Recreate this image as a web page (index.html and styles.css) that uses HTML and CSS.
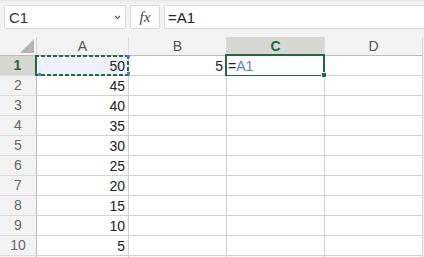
FILE: index.html
```html
<!DOCTYPE html>
<html lang="en">
<head>
    <meta charset="UTF-8">
    <meta name="viewport" content="width=device-width, initial-scale=1.0">
    <title>Sheet</title>
    <link rel="stylesheet" href="styles.css">
</head>
<body>
    <div class="toolbar">
        <div class="namebox">
            <span>C1</span>
            <svg class="chevron" width="7" height="5" viewBox="0 0 7 5"><path d="M1 1 L3.5 3.5 L6 1" fill="none" stroke="#555" stroke-width="1.1"/></svg>
        </div>
        <div class="fxbox"><i>fx</i></div>
        <div class="formula">=A1</div>
    </div>

    <div class="sheet">
        <div class="corner"><span class="tri"></span></div>
        <div class="colhead">A</div>
        <div class="colhead">B</div>
        <div class="colhead active">C</div>
        <div class="colhead">D</div>

        <div class="rowhead active">1</div>
        <div class="cell num ref">50</div>
        <div class="cell num">5</div>
        <div class="cell current">=<span class="refname">A1</span></div>
        <div class="cell"></div>

        <div class="rowhead">2</div><div class="cell num">45</div><div class="cell"></div><div class="cell"></div><div class="cell"></div>
        <div class="rowhead">3</div><div class="cell num">40</div><div class="cell"></div><div class="cell"></div><div class="cell"></div>
        <div class="rowhead">4</div><div class="cell num">35</div><div class="cell"></div><div class="cell"></div><div class="cell"></div>
        <div class="rowhead">5</div><div class="cell num">30</div><div class="cell"></div><div class="cell"></div><div class="cell"></div>
        <div class="rowhead">6</div><div class="cell num">25</div><div class="cell"></div><div class="cell"></div><div class="cell"></div>
        <div class="rowhead">7</div><div class="cell num">20</div><div class="cell"></div><div class="cell"></div><div class="cell"></div>
        <div class="rowhead">8</div><div class="cell num">15</div><div class="cell"></div><div class="cell"></div><div class="cell"></div>
        <div class="rowhead">9</div><div class="cell num">10</div><div class="cell"></div><div class="cell"></div><div class="cell"></div>
        <div class="rowhead">10</div><div class="cell num">5</div><div class="cell"></div><div class="cell"></div><div class="cell"></div>
        <div class="rowhead"></div><div class="cell"></div><div class="cell"></div><div class="cell"></div><div class="cell"></div>
    </div>
</body>
</html>
```

FILE: styles.css
```css
body {
    margin: 0;
    background: #f3f3f3;
    font-family: "Liberation Sans", Arial, sans-serif;
    font-size: 14px;
    color: #222;
    overflow: hidden;
}
.toolbar {
    display: flex;
    gap: 4px;
    padding: 5px 0 0 4px;
    height: 24px;
    background: linear-gradient(#e9e9e9 0, #f3f3f3 4px);
}
.namebox, .fxbox, .formula {
    background: #fff;
    border: 1px solid #dadada;
    border-radius: 2px;
    box-sizing: border-box;
    height: 24px;
    display: flex;
    align-items: center;
}
.namebox {
    width: 122px;
    padding: 0 4px 0 4px;
    justify-content: space-between;
    font-size: 15px;
    color: #333;
}
.fxbox {
    width: 30px;
    justify-content: center;
}
.fxbox i {
    font-family: "Liberation Serif", "Times New Roman", serif;
    font-size: 15px;
    color: #444;
}
.formula {
    flex: 1;
    padding-left: 3px;
    font-size: 15px;
    color: #222;
    border-right: none;
    border-radius: 2px 0 0 2px;
}
.sheet {
    margin-top: 8px;
    display: grid;
    grid-template-columns: 37px 92px 98px 98px 98px;
    grid-template-rows: 19px repeat(11, 20px);
}
.sheet > div {
    box-sizing: border-box;
    border-right: 1px solid #d2d2d2;
    border-bottom: 1px solid #d2d2d2;
    position: relative;
}
.corner {
    background: #f3f3f3;
    border-bottom-color: #bcbcbc !important;
}
.tri {
    position: absolute;
    right: 2px;
    bottom: 2px;
    width: 0;
    height: 0;
    border-left: 14px solid transparent;
    border-bottom: 14px solid #b4b4b4;
}
.colhead {
    background: #f3f3f3;
    text-align: center;
    line-height: 18px;
    color: #555;
    font-size: 14px;
    border-right-color: #dcdcdc !important;
    border-bottom-color: #bcbcbc !important;
}
.colhead.active {
    background: #d6d6d3;
    color: #1f6b3c;
    font-weight: bold;
    border-bottom: 2px solid #1f6b3c !important;
}
.rowhead {
    background: #f3f3f3;
    text-align: center;
    line-height: 19px;
    color: #666;
    border-bottom-color: #dcdcdc !important;
    border-right-color: #bcbcbc !important;
}
.rowhead.active {
    background: #d6d6d3;
    color: #1f6b3c;
    font-weight: bold;
    border-right: 2px solid #1f6b3c !important;
}
.cell {
    background: #fff;
    line-height: 20px;
    padding: 0 3px;
}
.num {
    text-align: right;
}
.ref {
    background: #eef1fc;
}
.ref::after {
    content: "";
    position: absolute;
    left: -2px;
    top: -1px;
    right: -1px;
    bottom: -1px;
    background:
        repeating-linear-gradient(90deg, #2a6a3e 0 4px, transparent 4px 6px) top / 100% 2px no-repeat,
        repeating-linear-gradient(90deg, #2a6a3e 0 4px, transparent 4px 6px) bottom / 100% 2px no-repeat,
        repeating-linear-gradient(180deg, #2a6a3e 0 4px, transparent 4px 6px) right / 2px 100% no-repeat;
}
.ref::before {
    content: "";
    position: absolute;
    right: -2px;
    top: -1px;
    width: 3px;
    height: 3px;
    background: #4d7be3;
    box-shadow: 0 17px 0 #4d7be3, -89px 18px 0 #4d7be3;
    z-index: 2;
}
.current::after {
    content: "";
    position: absolute;
    left: -2px;
    top: -2px;
    right: -1px;
    bottom: -2px;
    border: 2px solid #1f6b3c;
}
.current::before {
    content: "";
    position: absolute;
    right: -3px;
    bottom: -3px;
    width: 4px;
    height: 4px;
    background: #1f6b3c;
    border: 1px solid #fff;
    z-index: 2;
}
.current {
    padding-left: 1px;
}
.refname {
    color: #5b7be0;
}
```
